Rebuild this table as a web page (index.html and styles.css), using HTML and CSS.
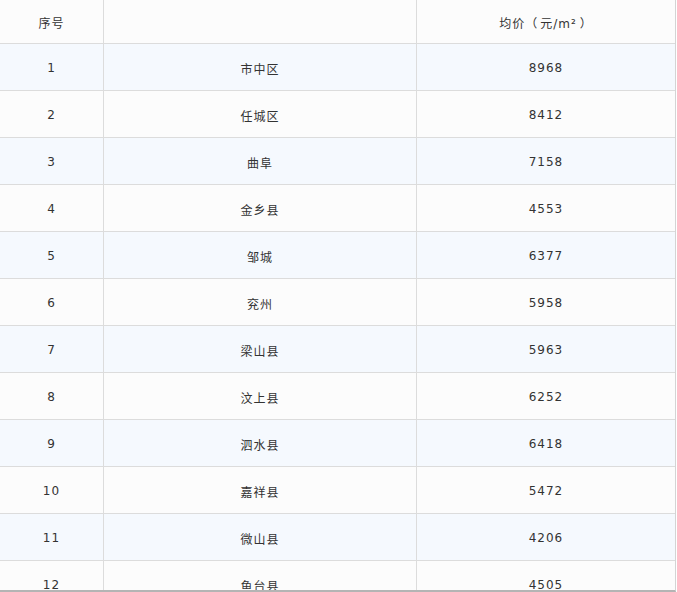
FILE: index.html
```html
<!DOCTYPE html>
<html lang="zh-CN">
<head>
<meta charset="utf-8">
<title>均价</title>
<link rel="stylesheet" href="styles.css">
</head>
<body>
<div class="wrap">
  <table class="price-table">
    <colgroup>
      <col class="c-no">
      <col class="c-name">
      <col class="c-price">
    </colgroup>
    <thead>
      <tr><th>序号</th><th></th><th>均价<span class="paren-l">（</span>元/m²<span class="paren-r">）</span></th></tr>
    </thead>
    <tbody>
      <tr><td>1</td><td>市中区</td><td>8968</td></tr>
      <tr><td>2</td><td>任城区</td><td>8412</td></tr>
      <tr><td>3</td><td>曲阜</td><td>7158</td></tr>
      <tr><td>4</td><td>金乡县</td><td>4553</td></tr>
      <tr><td>5</td><td>邹城</td><td>6377</td></tr>
      <tr><td>6</td><td>兖州</td><td>5958</td></tr>
      <tr><td>7</td><td>梁山县</td><td>5963</td></tr>
      <tr><td>8</td><td>汶上县</td><td>6252</td></tr>
      <tr><td>9</td><td>泗水县</td><td>6418</td></tr>
      <tr><td>10</td><td>嘉祥县</td><td>5472</td></tr>
      <tr><td>11</td><td>微山县</td><td>4206</td></tr>
      <tr><td>12</td><td>鱼台县</td><td>4505</td></tr>
    </tbody>
  </table>
</div>
</body>
</html>
```
FILE: styles.css
```css
html, body {
  margin: 0;
  padding: 0;
  background: #ffffff;
}
.wrap {
  width: 675px;
  height: 590px;
  overflow: hidden;
  border-right: 1px solid #d4d4d4;
  border-bottom: 2px solid #b4b4b4;
  background: #fcfcfc;
}
.price-table {
  width: 675px;
  table-layout: fixed;
  border-collapse: separate;
  border-spacing: 0;
  font-family: "DejaVu Sans", "Noto Sans CJK SC", sans-serif;
  font-size: 12px;
  letter-spacing: 1px;
  color: #333333;
}
.c-no { width: 104px; }
.c-name { width: 313px; }
.c-price { width: 258px; }
.price-table th,
.price-table td {
  box-sizing: border-box;
  padding: 2px 0 0 0;
  text-align: center;
  vertical-align: middle;
  font-weight: normal;
  border-bottom: 1px solid #dcdcdc;
  border-right: 1px solid #dcdcdc;
}
.price-table th:last-child,
.price-table td:last-child {
  border-right: none;
}
.paren-l {
  display: inline-block;
  padding-right: 2px;
}
.paren-r {
  display: inline-block;
  padding-left: 3px;
}
.price-table th {
  height: 44px;
  background: #fcfcfc;
}
.price-table td {
  height: 47px;
}
.price-table tbody tr:nth-child(odd) td {
  background: #f5f9fe;
}
.price-table tbody tr:nth-child(even) td {
  background: #fcfcfc;
}
```
